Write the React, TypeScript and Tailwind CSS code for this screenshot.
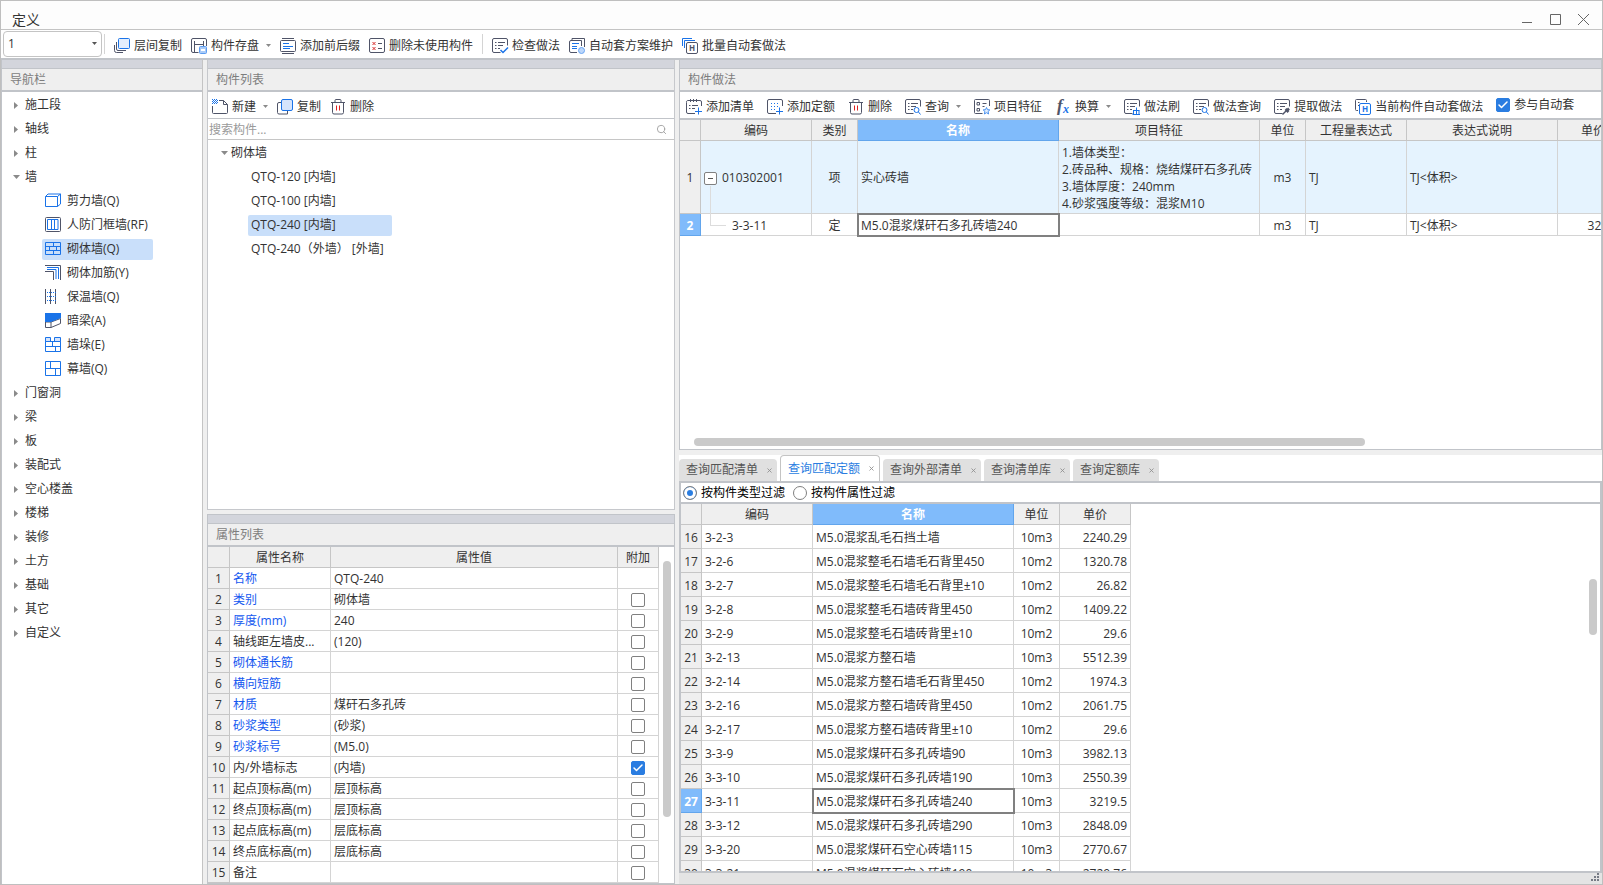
import React from 'react';
import { Check, Search, X } from 'lucide-react';

const DARK = '#4f5468';
const BLUE = '#1a73e8';

const Svg: React.FC<{ children: React.ReactNode }> = ({ children }) => (
  <svg width="16" height="16" viewBox="0 0 16 16" fill="none" stroke={DARK} className="shrink-0 overflow-visible" aria-hidden="true">{children}</svg>
);

const Caret = () => <svg width="5" height="4" viewBox="0 0 5 4" className="ml-[3px] shrink-0" aria-hidden="true"><path d="M0 0h5L2.500 3z" fill="#8a8a8a" /></svg>;

// Shared sheet outline whose lower right corner is left open for a badge
const Sheet = () => <path d="M8.500 14.500H2a1.500 1.500 0 0 1-1.500-1.500V2A1.500 1.500 0 0 1 2 .5h12A1.500 1.500 0 0 1 15.500 2v5.500" />;
const SheetLines = () => <path d="M3 4.500h1.500M6 4.500h7M3 7.500h1.500M6 7.500h5M3 10.500h1.500M6 10.500h2" />;

const icons = {
  layerCopy: <Svg><path d="M2.500 4v7a1.500 1.500 0 0 0 1.500 1.500h8M.5 7v5.500a2 2 0 0 0 2 2H9" /><rect x="4.500" y=".5" width="11" height="10" rx="1" fill="#e3eefd" stroke={BLUE} /></Svg>,
  save: <Svg><path d="M7.500 14.500H2A1.500 1.500 0 0 1 .5 13V2A1.500 1.500 0 0 1 2 .5h12A1.500 1.500 0 0 1 15.500 2v6" /><path d="M3.500 3v12M3.500 6.500h9M12.500 3v5" /><rect x="8.500" y="8.500" width="7" height="7" rx="1" fill="#a9cbf8" stroke="#5b9bf0" /><rect x="10" y="11" width="4" height="2" fill="#fff" stroke="none" /></Svg>,
  prefix: <Svg><path d="M2 .5h12M2 15.500h12" /><rect x=".5" y="2.500" width="15" height="11" rx="1" /><path d="M3 5.500h6M3 8.500h10M3 10.500h7" stroke={BLUE} /></Svg>,
  unused: <Svg><rect x=".5" y=".5" width="15" height="14" rx="1.500" /><path d="M3.500 4l3 3m0-3l-3 3M3.500 9l3 3m0-3l-3 3" stroke="#d93030" /><path d="M9 5.500h4M9 10.500h4" /></Svg>,
  check: <Svg><Sheet /><SheetLines /><path d="M8.500 12l2.500 2.500 5-5" stroke={BLUE} strokeWidth="1.500" /></Svg>,
  plan: <Svg><path d="M3 2.500V.5h12.500V9M12.500 8V2.500H2A1.500 1.500 0 0 0 .5 4v9A1.500 1.500 0 0 0 2 14.500h6" /><path d="M3 5.500h7M3 8.500h5M3 10.500h5" stroke={BLUE} /><circle cx="12.500" cy="12.500" r="3" fill="#bcd7fb" stroke="#6aa5f3" /></Svg>,
  batch: <Svg><path d="M.5 8V.5H10M2.500 10V2.500H13" stroke={BLUE} /><rect x="4.500" y="4.500" width="11" height="11" rx="1.500" fill="#fff" /><text x="10" y="13" fontSize="8" fontWeight="bold" textAnchor="middle" fill={DARK} stroke="none">H</text></Svg>,
  create: <Svg><path d="M.5 7v6.500a1 1 0 0 0 1 1h13a1 1 0 0 0 1-1V5.500l-4-4H7M11.500 1.500v4h4" /><path d="M0 .5h5M1 1.500h5M0 2.500h5M1 3.500h5M0 4.500h5" stroke={BLUE} strokeDasharray="1 1" /></Svg>,
  copy: <Svg><path d="M4 3.500H2A1.500 1.500 0 0 0 .5 5v8.500A1.500 1.500 0 0 0 2 15h8.500V12" /><rect x="4.500" y=".5" width="11" height="11" rx="1.500" fill="#d5e4fc" stroke={BLUE} /></Svg>,
  trash: <Svg><path d="M1 3.500h14M5 3V1.500a1 1 0 0 1 1-1h4a1 1 0 0 1 1 1V3M2.500 4v9.500a1.500 1.500 0 0 0 1.500 1.500h8a1.500 1.500 0 0 0 1.500-1.500V4" /><path d="M6.500 6.500v5M9.500 6.500v5" stroke="#e02020" /></Svg>,
  addList: <Svg><path d="M9 14.500H2A1.500 1.500 0 0 1 .5 13V3.500A1.500 1.500 0 0 1 2 1.500h12a1.500 1.500 0 0 1 1.500 1.500V7M4.500 0v3M7.500 0v3M10.500 0v3" /><path d="M3 6.500h1.500M6 6.500h6M3 9.500h1.500M6 9.500h3" /><path d="M12.500 8.500v7M9 12.500h7" stroke={BLUE} /></Svg>,
  addQuota: <Svg><path d="M9 14.500H2A1.500 1.500 0 0 1 .5 13V2A1.500 1.500 0 0 1 2 .5h12A1.500 1.500 0 0 1 15.500 2v5" /><path d="M4 4.500h8M4 7.500h8M4 10.500h4" stroke={BLUE} strokeDasharray="1 2" /><path d="M12.500 8.500v7M9 12.500h7" stroke={BLUE} /></Svg>,
  query: <Svg><Sheet /><SheetLines /><circle cx="11.500" cy="11" r="2.500" stroke={BLUE} /><path d="M13.500 13l2 2.500" stroke={BLUE} /></Svg>,
  feature: <Svg><path d="M8.500 14.500H1.500a1 1 0 0 1-1-1v-12a1 1 0 0 1 1-1h13a1 1 0 0 1 1 1V7" /><path d="M3 3.500h2.500v2.500H3zM3 9.500h2.500V12H3zM8.500 4.500h4M8.500 7.500h2" /><path d="M12.500 8.500l1 2.200 2.300.2-1.700 1.600.5 2.500-2.100-1.300-2.100 1.300.5-2.500-1.700-1.600 2.300-.2z" stroke="#4b93f0" fill="#e3eefd" /></Svg>,
  convert: <Svg><text x="2" y="12" fontSize="17" fontStyle="italic" fontWeight="bold" fontFamily="Liberation Serif, serif" fill={DARK} stroke="none">f</text><text x="8" y="14" fontSize="12" fontStyle="italic" fontWeight="bold" fontFamily="Liberation Serif, serif" fill={BLUE} stroke="none">x</text></Svg>,
  brush: <Svg><Sheet /><SheetLines /><path d="M9 11.500h6.500M9.500 11.500v4M12.500 8.500v7M15 11.500v4M8.500 15.500H16" stroke={BLUE} /></Svg>,
  extract: <Svg><Sheet /><SheetLines /><path d="M8.500 15.500l4-4" strokeWidth="1.500" /><path d="M11.500 10l3 3M13 11.500l2-2" strokeWidth="2.500" /></Svg>,
  current: <Svg><path d="M3 11.500H1.500a1 1 0 0 1-1-1v-9a1 1 0 0 1 1-1h9a1 1 0 0 1 1 1V3M3 3.500h1.500M3 6.500h1" /><rect x="4.500" y="4.500" width="11" height="11" rx="1.500" fill="#fff" stroke={BLUE} /><text x="10" y="13" fontSize="8" fontWeight="bold" textAnchor="middle" fill={BLUE} stroke="none">H</text></Svg>,
  shearWall: <Svg><path d="M.5 3.500h12v10H.5zM.5 3.500l2.500-2.500h12.500v10l-3 2.500M12.500 3.500L15.500 1" stroke={BLUE} /></Svg>,
  doorFrame: <Svg><rect x=".5" y=".5" width="15" height="14" rx="1" /><path d="M2.500 2.500h10.500v10H2.500zM6.500 3v9.500M9.500 3v9.500" stroke={BLUE} /></Svg>,
  masonry: <Svg><path d="M.5 1.500h15v12H.5zM.5 5.500h15M.5 9.500h15M8.500 1.500v4M4.500 5.500v4M11.500 5.500v4M8.500 9.500v4" stroke={BLUE} /></Svg>,
  rebar: <Svg><path d="M0 .5h15.500V15M0 6.500h8.500V15" /><path d="M2 2.500h11.500V14M2 4.500h9V14" stroke={BLUE} /></Svg>,
  insulation: <Svg><path d="M.5 0v15M5.500 0v15M10.500 0v15" /><path d="M2 3.500h9M2 7.500h9M2 11.500h9" stroke={BLUE} strokeDasharray="1 1" /></Svg>,
  hiddenBeam: <Svg><path d="M.5 9h5.500v5.500H.5zM6 9l9.500-3.500v5L6 14.500" fill="#fff" /><path d="M0 0h16v5L6 9H0z" fill={BLUE} stroke="none" /></Svg>,
  pier: <Svg><path d="M.5.5h5v4h-5zM9.500.5h6v4h-6z" stroke={BLUE} fill="#d5e4fc" /><path d="M.5 4.500v10h15v-10zM.5 9.500h15M7.500 4.500v5M10.500 9.500v5" stroke={BLUE} /></Svg>,
  curtain: <Svg><path d="M.5.5h15v14H.5zM.5 7.500h15M5.500.5v7M10.500 7.500v7" stroke={BLUE} /></Svg>,
};

type IconName = keyof typeof icons;

const ToolButton: React.FC<{ icon: IconName; label: string; menu?: boolean }> = ({ icon, label, menu }) => (
  <button className="flex items-center gap-1 pt-[3px] whitespace-nowrap shrink-0">
    {icons[icon]}
    {label}
    {menu && <Caret />}
  </button>
);

const CheckBox: React.FC<{ checked?: boolean; label?: string; hiddenLabel?: string }> = ({ checked, label, hiddenLabel }) => (
  <label className="inline-flex items-center gap-1 whitespace-nowrap align-middle">
    <span className="relative flex">
      <input type="checkbox" defaultChecked={checked} aria-label={hiddenLabel} className="peer appearance-none size-[14px] rounded-xs border border-[#808080] bg-white checked:bg-[#2a7de1] checked:border-[#2a7de1]" />
      <Check className="absolute inset-px size-3 text-white hidden peer-checked:block pointer-events-none" strokeWidth={3} />
    </span>
    {label}
  </label>
);

const DockTitle: React.FC<{ title: string }> = ({ title }) => (
  <div className="shrink-0">
    <div className="h-[9px] bg-[#d3d5dc] border-b border-[#c1c4c9]" />
    <h2 className="h-[23px] pl-2 pt-px flex items-center bg-[#efefef] border-b-2 border-[#c1c4c9] text-[#7d7d7d]">{title}</h2>
  </div>
);

const HEAD = 'h-[21px] px-0 pt-[2px] pb-0 bg-[#efefef] border-r border-b border-[#c6c6c6] font-normal text-center whitespace-nowrap';
const HEAD_ACTIVE = 'h-[21px] px-0 pt-[2px] pb-0 bg-[#80bbfb] border-r border-b border-[#62a5ec] font-bold text-white text-center';
const NUM = 'px-0 pt-[2px] pb-0 bg-[#efefef] border-r border-b border-[#c6c6c6] text-center';
const NUM_ACTIVE = 'px-0 pt-[2px] pb-0 bg-[#80bbfb] border-r border-b border-[#62a5ec] font-bold text-white text-center';
const CELL = 'px-[3px] pt-[2px] pb-0 border-r border-b border-[#d4d4d4] whitespace-nowrap';
const FOCUS = 'outline-2 -outline-offset-1 outline-[#808080]';

const wallItems: { label: string; icon: IconName }[] = [
  { label: '剪力墙(Q)', icon: 'shearWall' },
  { label: '人防门框墙(RF)', icon: 'doorFrame' },
  { label: '砌体墙(Q)', icon: 'masonry' },
  { label: '砌体加筋(Y)', icon: 'rebar' },
  { label: '保温墙(Q)', icon: 'insulation' },
  { label: '暗梁(A)', icon: 'hiddenBeam' },
  { label: '墙垛(E)', icon: 'pier' },
  { label: '幕墙(Q)', icon: 'curtain' },
];

const navGroups = ['施工段', '轴线', '柱', '墙', '门窗洞', '梁', '板', '装配式', '空心楼盖', '楼梯', '装修', '土方', '基础', '其它', '自定义'];

const components = ['QTQ-120 [内墙]', 'QTQ-100 [内墙]', 'QTQ-240 [内墙]', 'QTQ-240（外墙） [外墙]'];

const properties = [
  { name: '名称', value: 'QTQ-240', key: true, noExtra: true },
  { name: '类别', value: '砌体墙', key: true },
  { name: '厚度(mm)', value: '240', key: true },
  { name: '轴线距左墙皮...', value: '(120)' },
  { name: '砌体通长筋', value: '', key: true },
  { name: '横向短筋', value: '', key: true },
  { name: '材质', value: '煤矸石多孔砖', key: true },
  { name: '砂浆类型', value: '(砂浆)', key: true },
  { name: '砂浆标号', value: '(M5.0)', key: true },
  { name: '内/外墙标志', value: '(内墙)', checked: true },
  { name: '起点顶标高(m)', value: '层顶标高' },
  { name: '终点顶标高(m)', value: '层顶标高' },
  { name: '起点底标高(m)', value: '层底标高' },
  { name: '终点底标高(m)', value: '层底标高' },
  { name: '备注', value: '' },
];

const quotas = [
  ['3-2-3', 'M5.0混浆乱毛石挡土墙', '10m3', '2240.29'],
  ['3-2-6', 'M5.0混浆整毛石墙毛石背里450', '10m2', '1320.78'],
  ['3-2-7', 'M5.0混浆整毛石墙毛石背里±10', '10m2', '26.82'],
  ['3-2-8', 'M5.0混浆整毛石墙砖背里450', '10m2', '1409.22'],
  ['3-2-9', 'M5.0混浆整毛石墙砖背里±10', '10m2', '29.6'],
  ['3-2-13', 'M5.0混浆方整石墙', '10m3', '5512.39'],
  ['3-2-14', 'M5.0混浆方整石墙毛石背里450', '10m2', '1974.3'],
  ['3-2-16', 'M5.0混浆方整石墙砖背里450', '10m2', '2061.75'],
  ['3-2-17', 'M5.0混浆方整石墙砖背里±10', '10m2', '29.6'],
  ['3-3-9', 'M5.0混浆煤矸石多孔砖墙90', '10m3', '3982.13'],
  ['3-3-10', 'M5.0混浆煤矸石多孔砖墙190', '10m3', '2550.39'],
  ['3-3-11', 'M5.0混浆煤矸石多孔砖墙240', '10m3', '3219.5'],
  ['3-3-12', 'M5.0混浆煤矸石多孔砖墙290', '10m3', '2848.09'],
  ['3-3-20', 'M5.0混浆煤矸石空心砖墙115', '10m3', '2770.67'],
  ['3-3-21', 'M5.0混浆煤矸石空心砖墙190', '10m3', '2729.76'],
];

const tabs = ['查询匹配清单', '查询匹配定额', '查询外部清单', '查询清单库', '查询定额库'];

const TitleBar = () => (
  <header className="h-[29px] shrink-0 flex items-end justify-between pl-[11px] pr-[13px] bg-[#fdfdfd] border-b border-[#c4c4c4]">
    <h1 className="text-[14px] leading-[18px]">定义</h1>
    <div className="flex items-center gap-[17px] pb-1 text-[#666]">
      <button aria-label="最小化"><svg width="11" height="11" stroke="currentColor"><path d="M0 8.500h10" /></svg></button>
      <button aria-label="最大化"><svg width="11" height="11" stroke="currentColor" fill="none"><path d="M.5.5h10v10H.5z" /></svg></button>
      <button aria-label="关闭"><svg width="11" height="11" stroke="currentColor"><path d="M0 0l11 11M11 0L0 11" /></svg></button>
    </div>
  </header>
);

const MainToolbar = () => (
  <div className="h-[30px] shrink-0 flex items-center gap-[9px] pl-[2px] bg-white border-b-2 border-[#c1c4c9]">
    <div className="flex items-center gap-[2px]">
      <div className="relative flex items-center">
        <select aria-label="楼层" className="appearance-none w-[99px] h-[26px] pl-1 rounded-sm border border-[#c4c4c4] bg-white">
          <option>1</option>
        </select>
        <svg width="5" height="4" viewBox="0 0 5 4" className="absolute right-[5px] pointer-events-none"><path d="M0 0h5L2.500 3z" fill="#555" /></svg>
      </div>
      <div className="w-px h-5 bg-[#d4d4d4]" />
    </div>
    <ToolButton icon="layerCopy" label="层间复制" />
    <ToolButton icon="save" label="构件存盘" menu />
    <ToolButton icon="prefix" label="添加前后缀" />
    <ToolButton icon="unused" label="删除未使用构件" />
    <div className="w-px h-5 bg-[#d4d4d4]" />
    <ToolButton icon="check" label="检查做法" />
    <ToolButton icon="plan" label="自动套方案维护" />
    <ToolButton icon="batch" label="批量自动套做法" />
  </div>
);

const NavPanel = () => (
  <aside className="w-[201px] shrink-0 flex flex-col bg-white border-r border-[#c4c4c4]">
    <DockTitle title="导航栏" />
    <nav className="flex flex-col items-start pt-px">
      {navGroups.map((group) => (
        <React.Fragment key={group}>
          <button className="h-6 flex items-center gap-[5px] pl-[11px]">
            <svg width="7" height="7" fill="#8a8a8a">{group === '墙' ? <path d="M0 1h7L3.500 5z" /> : <path d="M1 0v7l4-3.500z" />}</svg>
            {group}
          </button>
          {group === '墙' && wallItems.map((item) => (
            <button key={item.label} className="h-6 flex items-center pl-10">
              <span className={`h-[21px] flex items-center gap-[6px] pl-[3px] rounded-xs ${item.icon === 'masonry' ? 'w-[111px] bg-[#c9dffa]' : ''}`}>
                {icons[item.icon]}
                {item.label}
              </span>
            </button>
          ))}
        </React.Fragment>
      ))}
    </nav>
  </aside>
);

const ComponentList = () => (
  <section className="flex-1 min-h-0 flex flex-col bg-white border-x border-b border-[#c6c8cc]">
    <DockTitle title="构件列表" />
    <div className="h-[27px] shrink-0 flex items-center gap-[9px] pl-1 border-b border-[#c1c4c9]">
      <ToolButton icon="create" label="新建" menu />
      <ToolButton icon="copy" label="复制" />
      <ToolButton icon="trash" label="删除" />
    </div>
    <div className="h-[21px] shrink-0 flex items-center border-b border-[#c6c6c6]">
      <input type="text" aria-label="搜索构件" placeholder="搜索构件..." className="flex-1 pl-px pt-px outline-none placeholder:text-[#9a9a9a]" />
      <Search className="size-[11px] mr-[7px] text-[#a0a0a0]" />
    </div>
    <div className="flex flex-col items-start pt-px">
      <button className="h-6 flex items-center gap-[3px] pl-[13px]">
        <svg width="7" height="7" fill="#8a8a8a"><path d="M0 1h7L3.500 5z" /></svg>
        砌体墙
      </button>
      {components.map((name, i) => (
        <button key={name} className="h-6 flex items-center pl-10">
          <span className={`h-[21px] flex items-center pl-[3px] rounded-xs ${i === 2 ? 'w-36 bg-[#c9dffa]' : ''}`}>{name}</span>
        </button>
      ))}
    </div>
  </section>
);

const PropertyPanel = () => (
  <section className="shrink-0 flex flex-col bg-white border border-[#c1c4c9]">
    <DockTitle title="属性列表" />
    <div className="flex">
      <table className="flex-1 table-fixed border-separate border-spacing-0">
        <colgroup><col className="w-[22px]" /><col className="w-[101px]" /><col /><col className="w-[41px]" /></colgroup>
        <thead>
          <tr>
            <th className={HEAD} />
            <th className={HEAD}>属性名称</th>
            <th className={HEAD}>属性值</th>
            <th className={HEAD}>附加</th>
          </tr>
        </thead>
        <tbody>
          {properties.map((p, i) => (
            <tr key={p.name} className="h-[21px]">
              <td className={NUM}>{i + 1}</td>
              <td className={`${CELL} ${p.key ? 'text-[#1458f0]' : ''}`}>{p.name}</td>
              <td className={CELL}>{p.value}</td>
              <td className={`${CELL} text-center leading-none`}>{!p.noExtra && <CheckBox checked={p.checked} hiddenLabel={`附加 ${p.name}`} />}</td>
            </tr>
          ))}
        </tbody>
      </table>
      <div className="w-[15px] shrink-0 pt-[14px] pl-1"><div className="w-2 h-64 rounded-full bg-[#cacaca]" /></div>
    </div>
  </section>
);

const MethodPanel = () => (
  <section className="flex-1 min-h-0 flex flex-col bg-white border-x border-b border-[#c1c4c9] overflow-hidden">
    <DockTitle title="构件做法" />
    <div className="h-7 shrink-0 flex items-center gap-[13px] pl-[6px] border-b-2 border-[#c1c4c9]">
      <ToolButton icon="addList" label="添加清单" />
      <ToolButton icon="addQuota" label="添加定额" />
      <ToolButton icon="trash" label="删除" />
      <ToolButton icon="query" label="查询" menu />
      <ToolButton icon="feature" label="项目特征" />
      <ToolButton icon="convert" label="换算" menu />
      <ToolButton icon="brush" label="做法刷" />
      <ToolButton icon="query" label="做法查询" />
      <ToolButton icon="extract" label="提取做法" />
      <ToolButton icon="current" label="当前构件自动套做法" />
      <CheckBox checked label="参与自动套" />
    </div>
    <div className="flex-1 overflow-hidden">
      <table className="w-[949px] table-fixed border-separate border-spacing-0">
        <colgroup>
          <col className="w-[21px]" /><col className="w-[111px]" /><col className="w-[46px]" /><col className="w-[201px]" /><col className="w-[201px]" />
          <col className="w-[46px]" /><col className="w-[101px]" /><col className="w-[151px]" /><col className="w-[71px]" />
        </colgroup>
        <thead>
          <tr>
            <th className={HEAD} />
            <th className={HEAD}>编码</th>
            <th className={HEAD}>类别</th>
            <th className={HEAD_ACTIVE}>名称</th>
            <th className={HEAD}>项目特征</th>
            <th className={HEAD}>单位</th>
            <th className={HEAD}>工程量表达式</th>
            <th className={HEAD}>表达式说明</th>
            <th className={HEAD}>单价</th>
          </tr>
        </thead>
        <tbody>
          <tr className="h-[73px] bg-[#e5f3fe]">
            <td className={NUM}>1</td>
            <td className={CELL}>
              <div className="relative flex items-center gap-[5px]">
                <button aria-label="折叠" className="size-[13px] rounded-xs border border-[#808080] bg-white flex items-center justify-center"><span className="w-[5px] h-px bg-[#555]" /></button>
                010302001
                <span className="absolute left-[6px] top-4 h-7 border-l border-[#dcdcdc]" />
              </div>
            </td>
            <td className={`${CELL} text-center`}>项</td>
            <td className={CELL}>实心砖墙</td>
            <td className={`${CELL} leading-[17px]`}>1.墙体类型：<br />2.砖品种、规格：烧结煤矸石多孔砖<br />3.墙体厚度：240mm<br />4.砂浆强度等级：混浆M10</td>
            <td className={`${CELL} text-center`}>m3</td>
            <td className={CELL}>TJ</td>
            <td className={CELL}>TJ&lt;体积&gt;</td>
            <td className={CELL} />
          </tr>
          <tr className="h-[22px]">
            <td className={NUM_ACTIVE}>2</td>
            <td className={CELL}>
              <div className="relative pl-7">
                3-3-11
                <span className="absolute left-[6px] -top-1 w-4 h-3 border-l border-b border-[#dcdcdc]" />
              </div>
            </td>
            <td className={`${CELL} text-center`}>定</td>
            <td className={`${CELL} ${FOCUS}`}>M5.0混浆煤矸石多孔砖墙240</td>
            <td className={CELL} />
            <td className={`${CELL} text-center`}>m3</td>
            <td className={CELL}>TJ</td>
            <td className={CELL}>TJ&lt;体积&gt;</td>
            <td className={`${CELL} text-right`}>3219.5</td>
          </tr>
        </tbody>
      </table>
    </div>
    <div className="shrink-0 pl-[14px] pb-[3px]"><div className="w-[74%] h-2 rounded-full bg-[#cacaca]" /></div>
  </section>
);

const QueryPanel = () => (
  <section className="h-[418px] shrink-0 flex flex-col bg-white">
    <div className="h-[26px] shrink-0 flex items-end gap-[3px]">
      {tabs.map((tab, i) => (
        <div key={tab} className={`flex items-center gap-2 pl-[7px] pr-1 rounded-t-sm ${i === 1 ? 'h-[26px] bg-white border border-b-0 border-[#c4c4c4] text-[#2a7de1]' : 'h-[22px] bg-[#e0e0e0] text-[#555]'}`}>
          <button>{tab}</button>
          <button aria-label={`关闭${tab}`}><X className="size-[7px] text-[#909090]" strokeWidth={3} /></button>
        </div>
      ))}
    </div>
    <div className="flex-1 min-h-0 flex flex-col border-2 border-[#c1c4c9]">
      <div className="h-[21px] shrink-0 flex items-center gap-2 pl-[2px] border-b-2 border-[#c1c4c9] text-black">
        {['按构件类型过滤', '按构件属性过滤'].map((label, i) => (
          <label key={label} className="flex items-center gap-1">
            <input type="radio" name="filter" defaultChecked={i === 0} className="appearance-none size-[14px] rounded-full border border-[#808080] checked:bg-[#2a7de1] checked:shadow-[inset_0_0_0_3px_white]" />
            {label}
          </label>
        ))}
      </div>
      <div className="flex-1 min-h-0 flex justify-between overflow-hidden">
        <table className="w-[450px] h-fit table-fixed border-separate border-spacing-0">
          <colgroup><col className="w-[21px]" /><col className="w-[111px]" /><col className="w-[201px]" /><col className="w-[46px]" /><col className="w-[71px]" /></colgroup>
          <thead>
            <tr>
              <th className={HEAD} />
              <th className={HEAD}>编码</th>
              <th className={HEAD_ACTIVE}>名称</th>
              <th className={HEAD}>单位</th>
              <th className={HEAD}>单价</th>
            </tr>
          </thead>
          <tbody>
            {quotas.map(([code, name, unit, price], i) => (
              <tr key={code} className="h-6">
                <td className={i === 11 ? NUM_ACTIVE : NUM}>{i + 16}</td>
                <td className={CELL}>{code}</td>
                <td className={`${CELL} ${i === 11 ? FOCUS : ''}`}>{name}</td>
                <td className={`${CELL} text-center`}>{unit}</td>
                <td className={`${CELL} text-right`}>{price}</td>
              </tr>
            ))}
          </tbody>
        </table>
        <div className="pt-[75px] pr-[3px]"><div className="w-2 h-14 rounded-full bg-[#cacaca]" /></div>
      </div>
    </div>
  </section>
);

export default function App() {
  return (
    <div className="h-screen flex flex-col overflow-hidden border border-[#bfbfbf] bg-[#efefef] text-xs text-[#333] font-['Open_Sans','Noto_Sans_CJK_SC',sans-serif]">
      <TitleBar />
      <MainToolbar />
      <main className="flex-1 min-h-0 flex gap-1 border-l border-[#c1c4c9]">
        <NavPanel />
        <div className="w-[468px] shrink-0 flex flex-col gap-1">
          <ComponentList />
          <PropertyPanel />
        </div>
        <div className="flex-1 min-w-0 flex flex-col">
          <MethodPanel />
          <div className="h-[5px] shrink-0" />
          <QueryPanel />
          <footer className="h-[11px] shrink-0 flex items-end justify-end pr-[3px] pb-[3px] bg-[#e4e4e4]">
            <svg width="8" height="8" fill="#777b85"><path d="M6 0h2v2H6zM3 3h2v2H3zM6 3h2v2H6zM0 6h2v2H0zM3 6h2v2H3zM6 6h2v2H6z" /></svg>
          </footer>
        </div>
      </main>
    </div>
  );
}
